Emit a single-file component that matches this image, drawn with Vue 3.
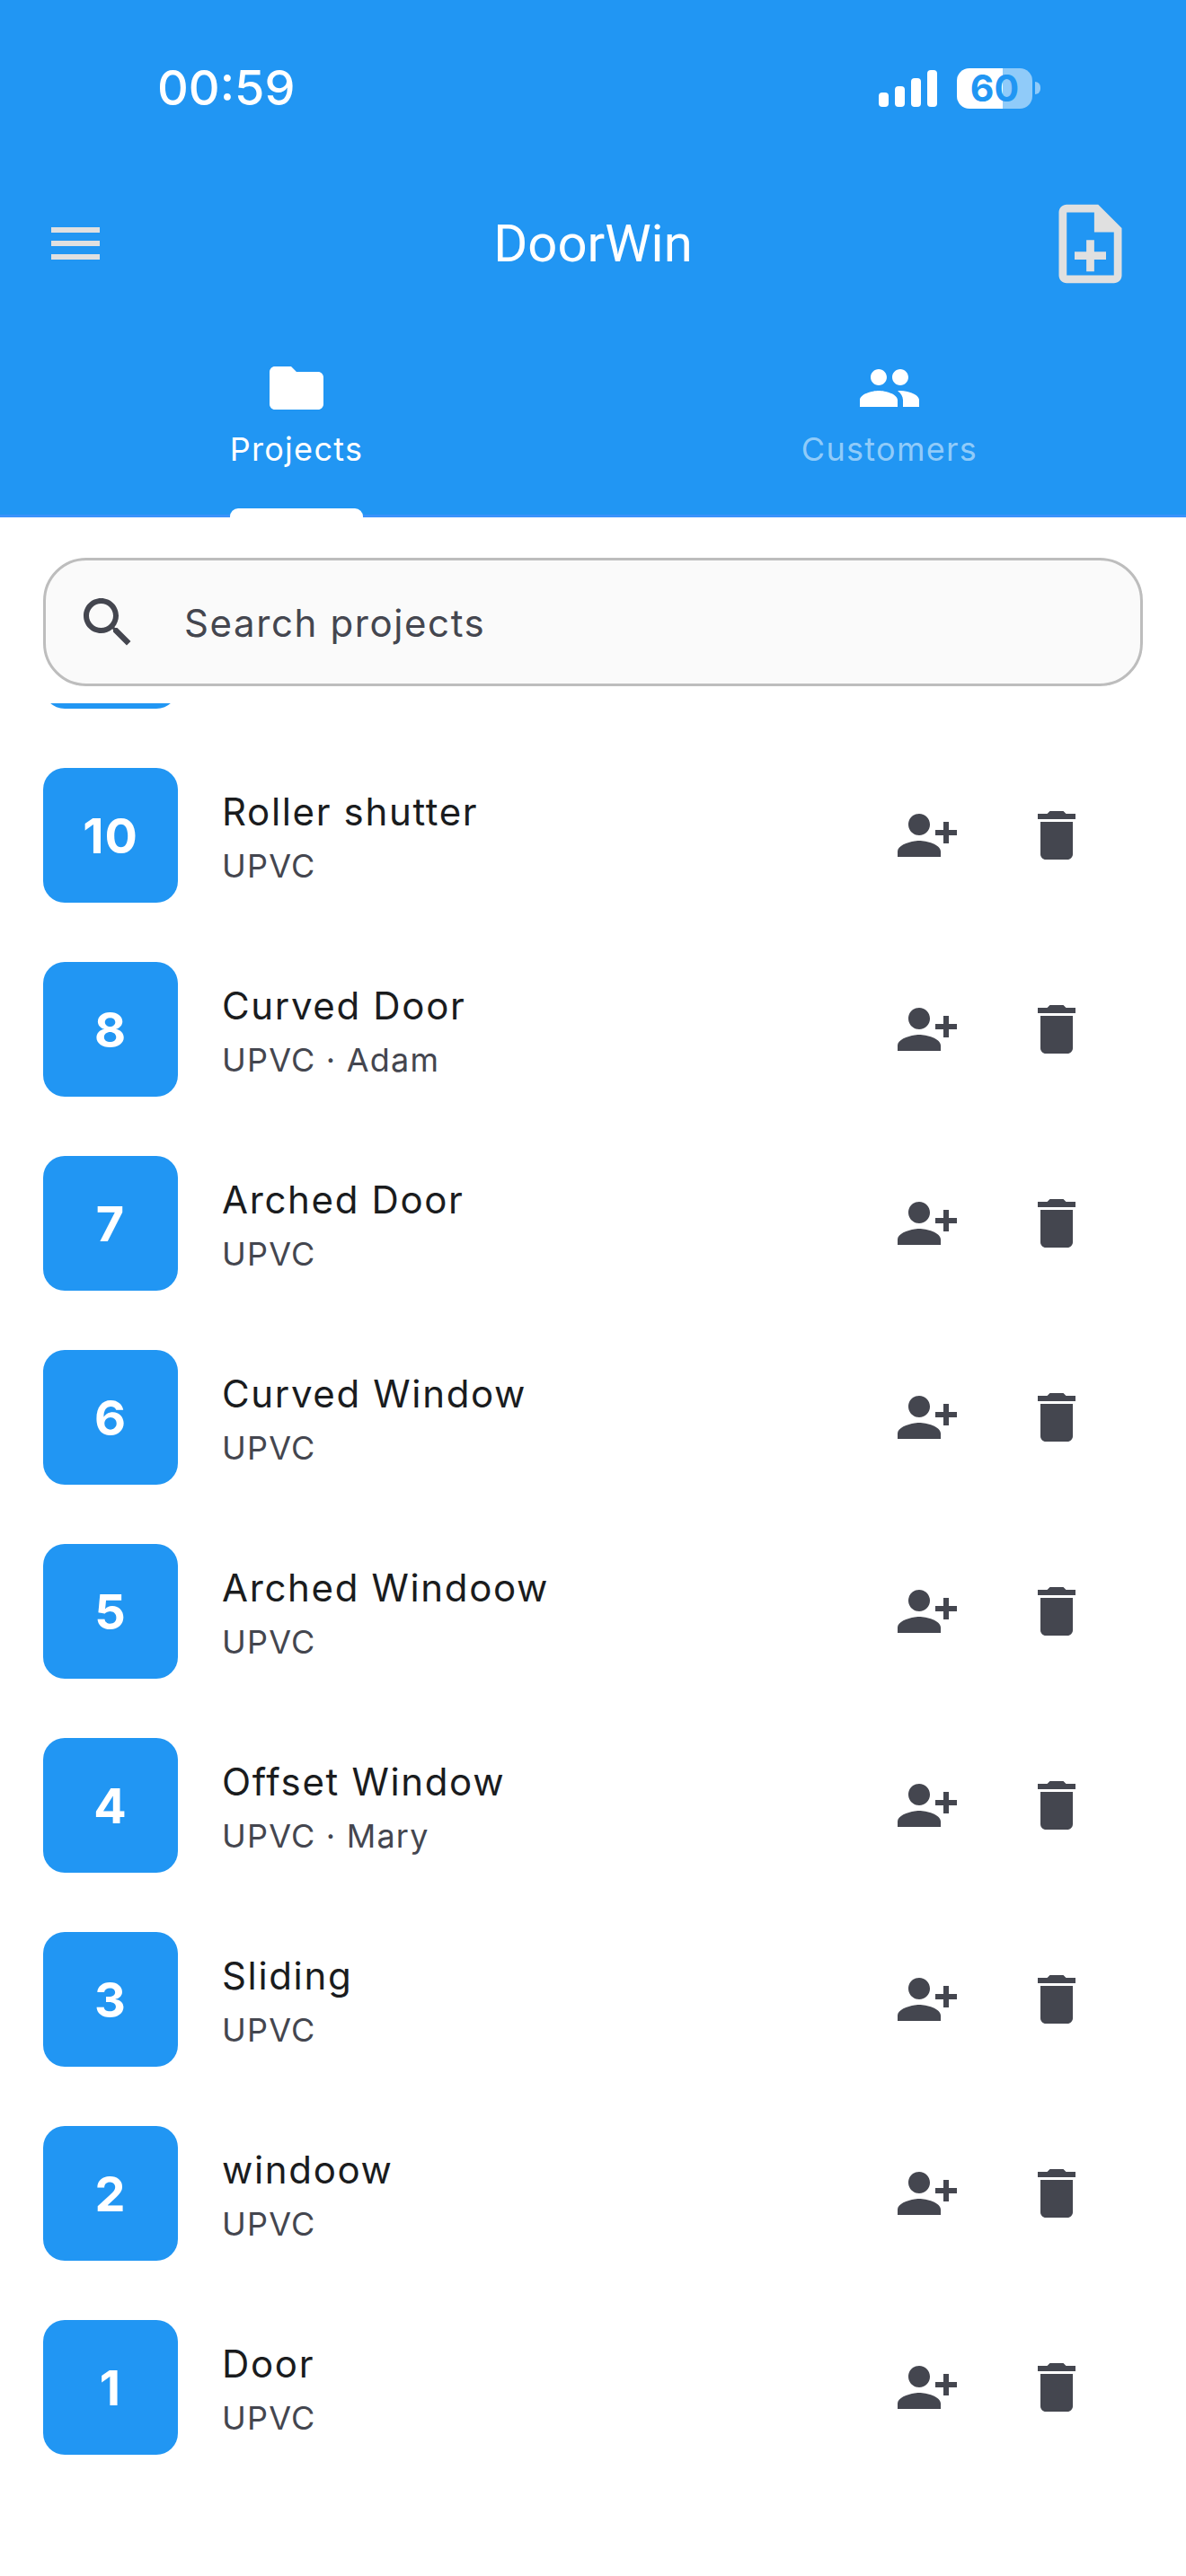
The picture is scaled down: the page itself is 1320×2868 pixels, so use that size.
<script setup>
const rows = [
  { n: 10, title: 'Roller shutter', sub: 'UPVC' },
  { n: 8, title: 'Curved Door', sub: 'UPVC · Adam' },
  { n: 7, title: 'Arched Door', sub: 'UPVC' },
  { n: 6, title: 'Curved Window', sub: 'UPVC' },
  { n: 5, title: 'Arched Windoow', sub: 'UPVC' },
  { n: 4, title: 'Offset Window', sub: 'UPVC · Mary' },
  { n: 3, title: 'Sliding', sub: 'UPVC' },
  { n: 2, title: 'windoow', sub: 'UPVC' },
  { n: 1, title: 'Door', sub: 'UPVC' },
]
</script>

<template>
  <div class="page">
    <header class="header">
      <div class="status">
        <span class="time">00:59</span>
        <div class="status-right">
          <div class="signal">
            <i class="b1"></i><i class="b2"></i><i class="b3"></i><i class="b4"></i>
          </div>
          <div class="battery-wrap">
            <div class="battery">60</div>
            <div class="nub"></div>
          </div>
        </div>
      </div>
      <div class="appbar">
        <svg class="ic72 menu" viewBox="0 0 24 24"><path d="M3 18h18v-2H3v2zm0-5h18v-2H3v2zm0-7v2h18V6H3z"/></svg>
        <div class="title">DoorWin</div>
        <svg class="note" viewBox="0 0 24 24"><path d="M13 11h-2v3H8v2h3v3h2v-3h3v-2h-3zm1-9H6c-1.1 0-2 .9-2 2v16c0 1.1.89 2 1.99 2H18c1.1 0 2-.9 2-2V8l-6-6zm4 18H6V4h7v5h5v11z"/></svg>
      </div>
      <div class="tabs">
        <div class="tab">
          <svg class="ic72 white" viewBox="0 0 24 24"><path d="M10 4H4c-1.1 0-1.99.9-1.99 2L2 18c0 1.1.9 2 2 2h16c1.1 0 2-.9 2-2V8c0-1.1-.9-2-2-2h-8l-2-2z"/></svg>
          <div class="tab-label active">
            Projects
            <div class="indicator"></div>
          </div>
        </div>
        <div class="tab">
          <svg class="ic72 white" viewBox="0 0 24 24"><path d="M16 11c1.66 0 2.99-1.34 2.99-3S17.66 5 16 5c-1.66 0-3 1.34-3 3s1.34 3 3 3zm-8 0c1.66 0 2.99-1.34 2.99-3S9.66 5 8 5C6.34 5 5 6.34 5 8s1.34 3 3 3zm0 2c-2.33 0-7 1.17-7 3.5V19h14v-2.5c0-2.33-4.67-3.5-7-3.5zm8 0c-.29 0-.62.02-.97.05 1.16.84 1.97 1.97 1.97 3.45V19h6v-2.5c0-2.33-4.67-3.5-7-3.5z"/></svg>
          <div class="tab-label">Customers</div>
        </div>
      </div>
    </header>

    <div class="search">
      <svg class="ic72 dark" viewBox="0 0 24 24"><path d="M15.5 14h-.79l-.28-.27C15.41 12.59 16 11.11 16 9.5 16 5.91 13.09 3 9.5 3S3 5.91 3 9.5 5.91 16 9.5 16c1.61 0 3.09-.59 4.23-1.57l.27.28v.79l5 4.99L20.49 19l-4.99-5zm-6 0C7.01 14 5 11.99 5 9.5S7.01 5 9.5 5 14 7.01 14 9.5 11.99 14 9.5 14z"/></svg>
      <span class="placeholder">Search projects</span>
    </div>

    <div class="list">
      <div class="list-inner">
        <div class="row">
          <div class="badge"></div>
        </div>
        <div v-for="r in rows" :key="r.n" class="row">
          <div class="badge">{{ r.n }}</div>
          <div class="text">
            <div class="row-title">{{ r.title }}</div>
            <div class="row-sub">{{ r.sub }}</div>
          </div>
          <div class="actions">
            <svg class="ic72 dark" viewBox="0 0 24 24"><path transform="matrix(-1 0 0 1 24 0)" d="M15 12c2.21 0 4-1.79 4-4s-1.79-4-4-4-4 1.79-4 4 1.79 4 4 4zm-9-2V7H4v3H1v2h3v3h2v-3h3v-2H6zm9 4c-2.67 0-8 1.34-8 4v2h16v-2c0-2.66-5.33-4-8-4z"/></svg>
            <svg class="ic72 dark" viewBox="0 0 24 24"><path d="M6 19c0 1.1.9 2 2 2h8c1.1 0 2-.9 2-2V7H6v12zM19 4h-3.5l-1-1h-5l-1 1H5v2h14V4z"/></svg>
          </div>
        </div>
      </div>
    </div>
  </div>
</template>

<style scoped>
.page {
  width: 1320px;
  height: 2868px;
  background: #fff;
  display: flex;
  flex-direction: column;
  overflow: hidden;
  font-family: Inter, "Liberation Sans", sans-serif;
}
.header {
  height: 576px;
  flex: none;
  background: linear-gradient(to top, #3a92fb 3px, #2196f3 3px);
  color: #fff;
  display: flex;
  flex-direction: column;
}
.status {
  height: 196px;
  flex: none;
  display: flex;
  align-items: center;
  justify-content: space-between;
  padding: 0 162px 0 175px;
}
.time {
  font-size: 54px;
  font-weight: 500;
  line-height: 60px;
}
.status-right {
  display: flex;
  align-items: center;
  gap: 22px;
}
.signal {
  display: flex;
  align-items: flex-end;
  gap: 7px;
  height: 41px;
}
.signal i {
  width: 11px;
  background: #fff;
  border-radius: 4px;
}
.b1 { height: 16px; }
.b2 { height: 23px; }
.b3 { height: 32px; }
.b4 { height: 41px; }
.battery-wrap {
  display: flex;
  align-items: center;
  gap: 3px;
}
.battery {
  width: 84px;
  height: 45px;
  border-radius: 14px;
  background: linear-gradient(to right, #fff 0, #fff 51px, #90cbf9 51px, #90cbf9 100%);
  color: #2196f3;
  font-size: 41px;
  font-weight: 700;
  line-height: 45px;
  text-align: center;
}
.nub {
  width: 6px;
  height: 14px;
  background: #90cbf9;
  border-radius: 0 7px 7px 0;
}
.appbar {
  height: 150px;
  flex: none;
  display: grid;
  grid-template-columns: 1fr auto 1fr;
  align-items: center;
  padding: 0 54px 0 48px;
}
.title {
  font-family: Roboto, Inter, sans-serif;
  font-size: 58px;
  line-height: 72px;
  color: #fff;
  transform: translateX(3px);
}
.note {
  width: 105px;
  height: 105px;
  fill: #e0e0e0;
  justify-self: end;
}
.ic72 {
  width: 72px;
  height: 72px;
  flex: none;
  display: block;
}
.menu { fill: #e0e0e0; }
.white { fill: #fff; }
.dark { fill: #44464f; }
.tabs {
  flex: 1;
  display: flex;
}
.tab {
  flex: 1;
  display: flex;
  flex-direction: column;
  align-items: center;
  padding-top: 50px;
}
.tab-label {
  position: relative;
  height: 108px;
  padding-top: 5px;
  box-sizing: border-box;
  font-size: 36px;
  line-height: 54px;
  letter-spacing: 1.3px;
  color: #90cbf9;
}
.tab-label.active { color: #fff; }
.indicator {
  position: absolute;
  left: 0;
  right: 0;
  bottom: 0;
  height: 10px;
  background: #fff;
  border-radius: 9px 9px 0 0;
}
.search {
  flex: none;
  box-sizing: border-box;
  height: 143px;
  margin: 45px 48px 0;
  padding-left: 33px;
  display: flex;
  align-items: center;
  gap: 49px;
  background: #fafafa;
  border: 3px solid #bdbdbd;
  border-radius: 48px;
}
.placeholder {
  font-size: 42px;
  line-height: 54px;
  padding-top: 3px;
  letter-spacing: 1.6px;
  color: #44464f;
}
.list {
  flex: 1;
  margin-top: 19px;
  overflow: hidden;
}
.list-inner {
  margin-top: -177px;
}
.row {
  height: 216px;
  display: flex;
  align-items: center;
  padding: 0 108px 0 48px;
}
.badge {
  width: 150px;
  height: 150px;
  flex: none;
  border-radius: 24px;
  background: #2196f3;
  color: #fff;
  font-size: 54px;
  font-weight: 700;
  letter-spacing: 1px;
  display: flex;
  align-items: center;
  justify-content: center;
}
.text {
  flex: 1;
  margin-left: 49px;
  padding-top: 8px;
}
.row-title {
  font-size: 42px;
  line-height: 54px;
  letter-spacing: 1.65px;
  color: #1a1c1e;
}
.row-sub {
  font-size: 36px;
  line-height: 54px;
  margin-top: 6px;
  letter-spacing: 1.2px;
  color: #44464f;
}
.actions {
  display: flex;
  gap: 72px;
}
</style>
